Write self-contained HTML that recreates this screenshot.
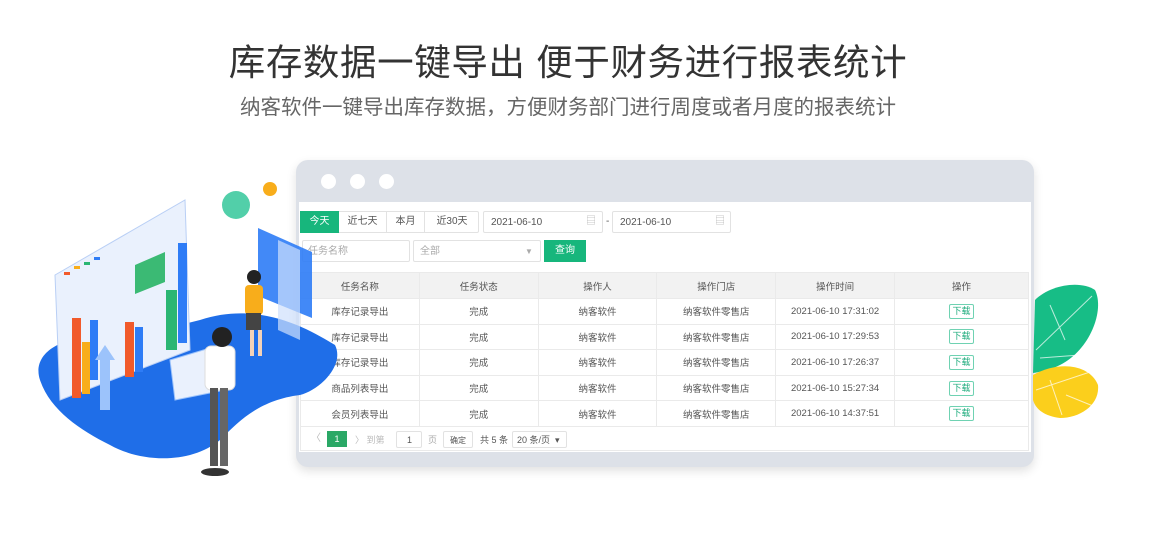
<!DOCTYPE html>
<html><head><meta charset="utf-8"><style>
*{margin:0;padding:0;box-sizing:border-box}
body{width:1175px;height:533px;background:#fff;position:relative;overflow:hidden;font-family:"Liberation Sans","Noto Sans CJK SC",sans-serif;color:#333}
.t1{position:absolute;left:0;width:1136px;top:39px;text-align:center;font-size:36.5px;line-height:48px;color:#333;letter-spacing:0.6px}
.t2{position:absolute;left:0;width:1136px;top:95px;text-align:center;font-size:20.5px;line-height:26px;color:#666}
.win{position:absolute;left:296px;top:160px;width:738px;height:307px;border-radius:12px;background:#dde1e8;box-shadow:0 4px 10px rgba(0,0,0,.12)}
.dot{position:absolute;top:14px;width:15px;height:15px;border-radius:50%;background:#fff}
.in{position:absolute;left:3px;top:42px;width:732px;height:250px;background:#fff}
.a{position:absolute;font-size:10px;color:#555;white-space:nowrap;line-height:12px}
.box{position:absolute;border:1px solid #e2e2e2;background:#fff;border-radius:2px}
.tab{position:absolute;top:9px;height:22px;line-height:22px;font-size:10px;color:#555;text-align:center}
table{position:absolute;left:1px;top:70px;width:729px;border-collapse:collapse;font-size:9.5px;color:#555;table-layout:fixed}
td{border:1px solid #eaeaea;text-align:center;height:25.6px}
tr.h td{background:#f2f2f2;height:26px}
.dl{display:inline-block;border:1px solid #6fd2b2;color:#1aaa7a;font-size:9px;padding:1px 2px;border-radius:2px;line-height:11px}
</style></head><body>
<div class="t1">库存数据一键导出 便于财务进行报表统计</div>
<div class="t2">纳客软件一键导出库存数据，方便财务部门进行周度或者月度的报表统计</div>

<div class="win">
<div class="dot" style="left:25px"></div><div class="dot" style="left:54px"></div><div class="dot" style="left:83px"></div>
<div class="in">
<div class="box" style="left:1px;top:9px;width:179px;height:22px"></div>
<div class="tab" style="left:1px;width:39px;background:#17b67c;color:#fff">今天</div>
<div class="tab" style="left:40px;width:48px;border-right:1px solid #e2e2e2">近七天</div>
<div class="tab" style="left:88px;width:38px;border-right:1px solid #e2e2e2">本月</div>
<div class="tab" style="left:126px;width:54px">近30天</div>
<div class="box" style="left:184px;top:9px;width:120px;height:22px"></div><div class="a" style="left:192px;top:15px">2021-06-10</div><div class="a" style="left:287px;top:14px;color:#bbb">▤</div>
<div class="a" style="left:307px;top:14px">-</div>
<div class="box" style="left:313px;top:9px;width:119px;height:22px"></div><div class="a" style="left:321px;top:15px">2021-06-10</div><div class="a" style="left:416px;top:14px;color:#bbb">▤</div>
<div class="box" style="left:3px;top:38px;width:108px;height:22px"></div><div class="a" style="left:9px;top:44px;color:#aaa">任务名称</div>
<div class="box" style="left:114px;top:38px;width:128px;height:22px"></div><div class="a" style="left:121px;top:44px;color:#aaa">全部</div><div class="a" style="left:226px;top:44px;color:#aaa;font-size:8px">▼</div>
<div class="tab" style="left:245px;top:38px;width:42px;background:#17b67c;color:#fff">查询</div>
<table>
<tr class="h"><td>任务名称</td><td>任务状态</td><td>操作人</td><td>操作门店</td><td>操作时间</td><td style="width:134px">操作</td></tr>
<tr><td>库存记录导出</td><td>完成</td><td>纳客软件</td><td>纳客软件零售店</td><td>2021-06-10 17:31:02</td><td><span class="dl">下载</span></td></tr>
<tr><td>库存记录导出</td><td>完成</td><td>纳客软件</td><td>纳客软件零售店</td><td>2021-06-10 17:29:53</td><td><span class="dl">下载</span></td></tr>
<tr><td>库存记录导出</td><td>完成</td><td>纳客软件</td><td>纳客软件零售店</td><td>2021-06-10 17:26:37</td><td><span class="dl">下载</span></td></tr>
<tr><td>商品列表导出</td><td>完成</td><td>纳客软件</td><td>纳客软件零售店</td><td>2021-06-10 15:27:34</td><td><span class="dl">下载</span></td></tr>
<tr><td>会员列表导出</td><td>完成</td><td>纳客软件</td><td>纳客软件零售店</td><td>2021-06-10 14:37:51</td><td><span class="dl">下载</span></td></tr>
</table>
<div style="position:absolute;left:1px;top:224px;width:729px;height:25px;border:1px solid #eaeaea;border-top:none"></div>
<div class="a" style="left:12px;top:231px;color:#bbb">〈</div>
<div style="position:absolute;left:28px;top:229px;width:20px;height:16px;background:#2aa866;color:#fff;font-size:9px;text-align:center;line-height:16px">1</div>
<div class="a" style="left:56px;top:232px;color:#bbb;font-size:9px">〉 到第</div>
<div class="box" style="left:97px;top:229px;width:26px;height:17px"></div><div class="a" style="left:108px;top:232px;font-size:9px">1</div>
<div class="a" style="left:129px;top:232px;color:#aaa;font-size:9px">页</div>
<div class="box" style="left:144px;top:229px;width:30px;height:17px"></div><div class="a" style="left:151px;top:233px;font-size:8px">确定</div>
<div class="a" style="left:181px;top:232px;font-size:9px">共 5 条</div>
<div class="box" style="left:213px;top:229px;width:55px;height:17px"></div><div class="a" style="left:218px;top:232px;font-size:9px">20 条/页 &nbsp;▾</div>
</div></div>

<svg style="position:absolute;left:0;top:0" width="1175" height="533">
<circle cx="236" cy="205" r="14" fill="#52cfa9"/>
<circle cx="270" cy="189" r="7" fill="#f8ad1b"/>
<path d="M40 380 C30 350 70 330 120 340 L200 320 C260 300 310 330 335 345 C345 365 320 390 300 395 C260 400 240 420 220 440 C190 465 140 462 110 445 C80 430 50 410 40 380Z" fill="#1f6ee8"/>
<path d="M55 275 L185 200 L190 350 L60 400Z" fill="#eaf1fd" stroke="#b9cff5"/>
<rect x="64" y="272" width="6" height="3" fill="#f15a2b"/><rect x="74" y="266" width="6" height="3" fill="#f8ad1b"/><rect x="84" y="262" width="6" height="3" fill="#2bb673"/><rect x="94" y="257" width="6" height="3" fill="#2e7cf6"/>
<rect x="72" y="318" width="9" height="80" fill="#f15a2b"/><rect x="82" y="342" width="8" height="52" fill="#f8ad1b"/><rect x="90" y="320" width="8" height="60" fill="#2e7cf6"/>
<rect x="125" y="322" width="9" height="55" fill="#f15a2b"/><rect x="135" y="327" width="8" height="45" fill="#2e7cf6"/>
<rect x="166" y="290" width="11" height="60" fill="#2bb673"/><rect x="178" y="243" width="9" height="100" fill="#2e7cf6"/>
<path d="M135 265 L165 252 L165 282 L135 294Z" fill="#3bba74"/>
<path d="M95 360 L105 345 L115 360 L110 360 L110 410 L100 410 L100 360Z" fill="#9cc3fb"/>
<path d="M258 228 L312 252 L312 318 L258 296Z" fill="#2e7cf6" opacity=".9"/>
<path d="M278 240 L300 250 L300 340 L278 330Z" fill="#cfe0fc" opacity=".7"/>
<rect x="245" y="285" width="18" height="30" rx="4" fill="#f8ad1b"/><circle cx="254" cy="277" r="7" fill="#222"/>
<rect x="246" y="313" width="15" height="17" fill="#444"/><rect x="250" y="330" width="4" height="26" fill="#f3d2b8"/><rect x="258" y="330" width="4" height="26" fill="#f3d2b8"/>
<path d="M170 360 L220 345 L225 390 L175 400Z" fill="#eaf1fd" stroke="#9cc3fb"/>
<rect x="205" y="346" width="30" height="44" rx="6" fill="#fff" stroke="#ddd"/><circle cx="222" cy="337" r="10" fill="#222"/>
<rect x="210" y="388" width="8" height="78" fill="#555"/><rect x="220" y="388" width="8" height="78" fill="#666"/>
<ellipse cx="215" cy="472" rx="14" ry="4" fill="#333"/>
<path d="M1035 300 C1050 285 1080 280 1095 290 C1105 310 1090 350 1060 365 C1050 370 1040 372 1033 373Z" fill="#17bd86"/>
<path d="M1033 375 C1060 360 1090 365 1098 385 C1100 405 1080 418 1060 418 C1045 416 1036 410 1033 400Z" fill="#fbcf1c"/>
<path d="M1036 350 L1092 296 M1050 305 L1065 340 M1040 358 L1080 355 M1036 390 L1090 372 M1050 380 L1062 415 M1066 395 L1098 408" stroke="#fff" stroke-width="1" opacity=".7" fill="none"/>
</svg>
</body></html>
